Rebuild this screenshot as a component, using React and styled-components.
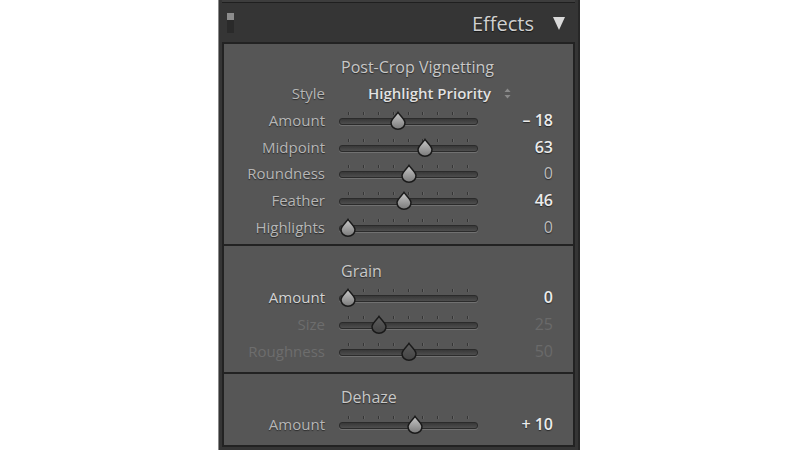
import React from 'react';
import styled, { createGlobalStyle } from 'styled-components';

const GlobalStyle = createGlobalStyle`
  html, body {
    margin: 0;
    padding: 0;
    background: #ffffff;
  }
  body {
    font-family: "Open Sans", "DejaVu Sans", sans-serif;
  }
`;

const Page = styled.div`
  width: 800px;
  height: 450px;
  overflow: hidden;
  background: #ffffff;
  padding-left: 218px;
  box-sizing: border-box;
`;

const Panel = styled.div`
  width: 362px;
  height: 450px;
  box-sizing: border-box;
  background: #353535;
  border-left: 1px solid #8a8a8a;
  border-right: 2px solid #272727;
  padding: 0 3px 0 3px;
  display: flex;
  flex-direction: column;
`;

const PrevEdge = styled.div`
  height: 2px;
  background: #3d3d3d;
  border-bottom: 1px solid #1f1f1f;
`;

const Header = styled.div`
  height: 39px;
  display: flex;
  align-items: center;
  padding: 0 10px 0 5px;
`;

const Switch = styled.div`
  width: 7px;
  height: 20px;
  display: flex;
  flex-direction: column;
  &::before {
    content: '';
    height: 7px;
    background: #8c8c8c;
  }
  &::after {
    content: '';
    flex: 1;
    background: #2a2a2a;
  }
`;

const HeaderTitle = styled.div`
  margin-left: auto;
  font-size: 20px;
  color: #d0d0d0;
  text-shadow: 0 1px 1px rgba(0, 0, 0, 0.6);
  line-height: 1;
  padding-top: 2px;
`;

const Caret = styled.div`
  margin-left: 19px;
  width: 0;
  height: 0;
  border-left: 6px solid transparent;
  border-right: 6px solid transparent;
  border-top: 13px solid #dadada;
  margin-top: 2px;
`;

const Section = styled.div`
  background: #565656;
  border: 2px solid #222222;
  padding-top: ${(p) => p.$top}px;
  padding-bottom: ${(p) => p.$bottom}px;
  & + & {
    margin-top: -2px;
  }
`;

const SectionTitle = styled.div`
  height: 26px;
  line-height: 26px;
  margin-left: 117px;
  font-size: 16px;
  color: #c8c8c8;
  text-shadow: 0 1px 1px rgba(0, 0, 0, 0.5);
`;

const Row = styled.div`
  height: 26.7px;
  display: grid;
  grid-template-columns: 115px 139px 75px;
  align-items: center;
`;

const toneColor = {
  hi: '#d4d4d4',
  normal: '#b6b6b6',
  off: '#6d6d6d',
};

const Label = styled.div`
  text-align: right;
  padding-right: 14px;
  font-size: 15px;
  color: ${(p) => toneColor[p.$tone || 'normal']};
  text-shadow: ${(p) => (p.$tone === 'off' ? 'none' : '0 1px 1px rgba(0, 0, 0, 0.5)')};
`;

const valueColor = {
  bright: '#ececec',
  normal: '#bdbdbd',
  off: '#6a6a6a',
};

const Value = styled.div`
  text-align: right;
  font-size: 16px;
  font-weight: ${(p) => (p.$tone === 'bright' ? 600 : 400)};
  color: ${(p) => valueColor[p.$tone]};
  text-shadow: ${(p) => (p.$tone === 'off' ? 'none' : '0 1px 1px rgba(0, 0, 0, 0.55)')};
`;

const StyleValue = styled.div`
  grid-column: 2 / 4;
  display: flex;
  align-items: center;
  padding-left: 29px;
  font-size: 15px;
  font-weight: 600;
  color: #e2e2e2;
  text-shadow: 0 1px 1px rgba(0, 0, 0, 0.55);
`;

const Stepper = styled.svg`
  width: 7px;
  height: 11px;
  margin-left: 13px;
`;

const SliderBox = styled.div`
  position: relative;
  height: 100%;
`;

const Track = styled.div`
  position: absolute;
  left: 0;
  right: 0;
  top: 50%;
  margin-top: -2px;
  height: 5px;
  border-radius: 3px;
  border: 1px solid #2b2b2b;
  background: linear-gradient(#383838, #4e4e4e);
  box-shadow: 0 1px 0 rgba(255, 255, 255, 0.16);
`;

const Ticks = styled.div`
  position: absolute;
  left: 9px;
  right: 10px;
  top: 50%;
  margin-top: -8px;
  height: 3px;
  display: flex;
  justify-content: space-between;
`;

const Tick = styled.span`
  width: 1px;
  height: 3px;
  background: #363636;
  box-shadow: 1px 0 0 rgba(255, 255, 255, 0.08);
`;

const Thumb = styled.svg`
  position: absolute;
  top: 50%;
  margin-top: -8px;
  margin-left: -8px;
  width: 16px;
  height: 18px;
  overflow: visible;
`;

const Slider = ({ pct, off }) => (
  <SliderBox>
    <Track />
    <Ticks>
      {Array.from({ length: 9 }).map((_, i) => (
        <Tick key={i} />
      ))}
    </Ticks>
    <Thumb viewBox="0 0 16 18" style={{ left: `${9 + pct * 122}px` }}>
      <defs>
        <linearGradient id={off ? 'thumbOff' : 'thumbOn'} x1="0" y1="0" x2="0" y2="1">
          <stop offset="0" stopColor={off ? '#5c5c5c' : '#c8c8c8'} />
          <stop offset="1" stopColor={off ? '#444444' : '#7a7a7a'} />
        </linearGradient>
      </defs>
      <path
        d="M8 0.4 C9.8 3.2 15 7.2 15 10.8 A7 6.4 0 0 1 1 10.8 C1 7.2 6.2 3.2 8 0.4 Z"
        fill={`url(#${off ? 'thumbOff' : 'thumbOn'})`}
        stroke="#1a1a1a"
        strokeWidth="1.5"
      />
    </Thumb>
  </SliderBox>
);

const SliderRow = ({ label, value, pct, labelTone, valueTone, off }) => (
  <Row>
    <Label $tone={labelTone}>{label}</Label>
    <Slider pct={pct} off={off} />
    <Value $tone={valueTone}>{value}</Value>
  </Row>
);

const vignette = [
  { label: 'Amount', value: '– 18', pct: 0.41, valueTone: 'bright' },
  { label: 'Midpoint', value: '63', pct: 0.63, valueTone: 'bright' },
  { label: 'Roundness', value: '0', pct: 0.5, valueTone: 'normal' },
  { label: 'Feather', value: '46', pct: 0.46, valueTone: 'bright' },
  { label: 'Highlights', value: '0', pct: 0, valueTone: 'normal' },
];

const grain = [
  { label: 'Amount', value: '0', pct: 0, valueTone: 'bright', labelTone: 'hi' },
  { label: 'Size', value: '25', pct: 0.25, valueTone: 'off', labelTone: 'off', off: true },
  { label: 'Roughness', value: '50', pct: 0.5, valueTone: 'off', labelTone: 'off', off: true },
];

const App = () => (
  <>
    <GlobalStyle />
    <Page>
      <Panel>
        <PrevEdge />
        <Header>
          <Switch />
          <HeaderTitle>Effects</HeaderTitle>
          <Caret />
        </Header>

        <Section $top={10} $bottom={4}>
          <SectionTitle>Post-Crop Vignetting</SectionTitle>
          <Row>
            <Label>Style</Label>
            <StyleValue>
              Highlight Priority
              <Stepper viewBox="0 0 7 11">
                <path d="M3.5 0.5 L6.5 4 L0.5 4 Z" fill="#8a8a8a" />
                <path d="M3.5 10.5 L6.5 7 L0.5 7 Z" fill="#8a8a8a" />
              </Stepper>
            </StyleValue>
          </Row>
          {vignette.map((r) => (
            <SliderRow key={r.label} {...r} />
          ))}
        </Section>

        <Section $top={12} $bottom={8}>
          <SectionTitle>Grain</SectionTitle>
          {grain.map((r) => (
            <SliderRow key={r.label} {...r} />
          ))}
        </Section>

        <Section $top={10} $bottom={8}>
          <SectionTitle>Dehaze</SectionTitle>
          <SliderRow label="Amount" value="+ 10" pct={0.55} valueTone="bright" />
        </Section>
      </Panel>
    </Page>
  </>
);

export default App;
